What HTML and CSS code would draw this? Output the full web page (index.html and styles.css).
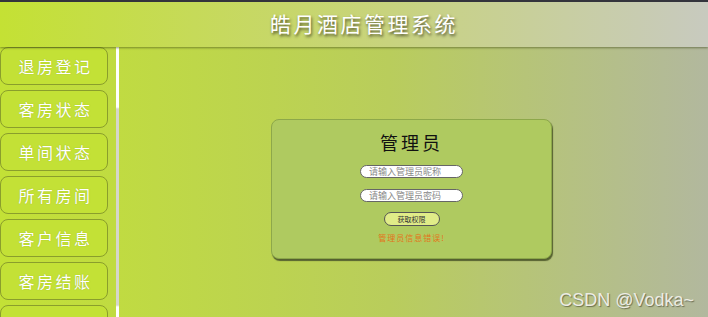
FILE: index.html
```html
<!DOCTYPE html>
<html lang="zh-CN">
<head>
  <meta charset="UTF-8" />
  <title>皓月酒店管理系统</title>
  <link rel="stylesheet" href="styles.css">
</head>
<body>
  <div class="header">
    <h1>皓月酒店管理系统</h1>
  </div>

  <div class="main">
    <div class="sidebar">
      <div class="menu">
        <button>退房登记</button>
        <button>客房状态</button>
        <button>单间状态</button>
        <button>所有房间</button>
        <button>客户信息</button>
        <button>客房结账</button>
        <button></button>
      </div>
      <div class="scrollbar"></div>
    </div>

    <div class="content">
      <div class="login-card">
        <h2>管理员</h2>
        <input type="text" placeholder="请输入管理员昵称" />
        <input type="password" placeholder="请输入管理员密码" />
        <button class="get-btn">获取权限</button>
        <p class="error">管理员信息错误!</p>
      </div>
      <div class="watermark">CSDN @Vodka~</div>
    </div>
  </div>
</body>
</html>
```

FILE: styles.css
```css
body {
  margin: 0;
  height: 317px;
  overflow: hidden;
  font-family: "Noto Sans CJK SC", "Noto Sans", sans-serif;
  background: linear-gradient(to right, #c3e136, #b9cd5c 55%, #b2b89e);
}
.header {
  height: 45px;
  border-top: 2px solid #34343c;
  background: linear-gradient(to right, #c4e134, #c8d37e 55%, #c8cabf);
  box-shadow: 0 1px 2px rgba(60, 70, 20, 0.55);
  display: flex;
  align-items: center;
  justify-content: center;
  position: relative;
  z-index: 1;
}
.header h1 {
  margin: 0 0 4px 0;
  padding-left: 20px;
  font-size: 21px;
  font-weight: 400;
  letter-spacing: 2.5px;
  color: #ffffff;
  text-shadow: 1px 2px 3px rgba(40, 40, 20, 0.75);
}
.main {
  display: flex;
  height: 270px;
}
.sidebar {
  display: flex;
  width: 119px;
  overflow: hidden;
  flex-shrink: 0;
}
.menu {
  width: 108px;
  display: flex;
  flex-direction: column;
  gap: 5px;
  margin-right: 8px;
}
.menu button {
  flex-shrink: 0;
  height: 38px;
  width: 108px;
  background: #c3e136;
  border: 1px solid #8a9e2c;
  border-radius: 8px;
  color: #ffffff;
  font-family: inherit;
  font-size: 16px;
  letter-spacing: 2.5px;
  padding: 0 0 0 3px;
  text-shadow: 0 0 1px rgba(120, 140, 30, 0.6);
}
.scrollbar {
  width: 3px;
  background: linear-gradient(to bottom, #ffffff 0, #ffffff 60px, #d6d6cc 62px, #d6d6cc 258px, #ffffff 260px);
}
.content {
  flex: 1;
  position: relative;
  display: flex;
  justify-content: center;
  padding-top: 72px;
  padding-right: 4px;
}
.login-card {
  width: 281px;
  height: 140px;
  box-sizing: border-box;
  background: #afca60;
  border: 1px solid #8da84a;
  border-radius: 8px;
  box-shadow: 1px 2px 1px #556030;
  display: flex;
  flex-direction: column;
  align-items: center;
}
.login-card h2 {
  margin: 9px 0 2px 0;
  font-size: 18px;
  font-weight: 400;
  letter-spacing: 3px;
  color: #111;
}
.login-card input {
  width: 103px;
  height: 13px;
  box-sizing: border-box;
  margin-top: 8px;
  padding: 0 8px;
  border: 1.5px solid #666;
  border-radius: 7px;
  background: #fff;
  font-family: inherit;
  font-size: 9px;
  line-height: 10px;
  outline: none;
}
.login-card input + input {
  margin-top: 11px;
}
.login-card input::placeholder {
  color: #888;
}
.get-btn {
  margin-top: 10px;
  width: 56px;
  height: 14px;
  padding: 0;
  background: #e0ec88;
  border: 1.5px solid #555;
  border-radius: 7px;
  font-family: inherit;
  font-size: 7px;
  line-height: 10px;
  color: #333;
}
.error {
  margin: 6px 0 0 0;
  font-size: 8px;
  letter-spacing: 1px;
  color: #e2751c;
}
.watermark {
  position: absolute;
  right: 14px;
  bottom: 6px;
  font-family: "Liberation Sans", Arial, sans-serif;
  font-size: 18px;
  color: #ecece4;
  text-shadow: 1px 1px 1px rgba(60, 60, 40, 0.6);
}
```
